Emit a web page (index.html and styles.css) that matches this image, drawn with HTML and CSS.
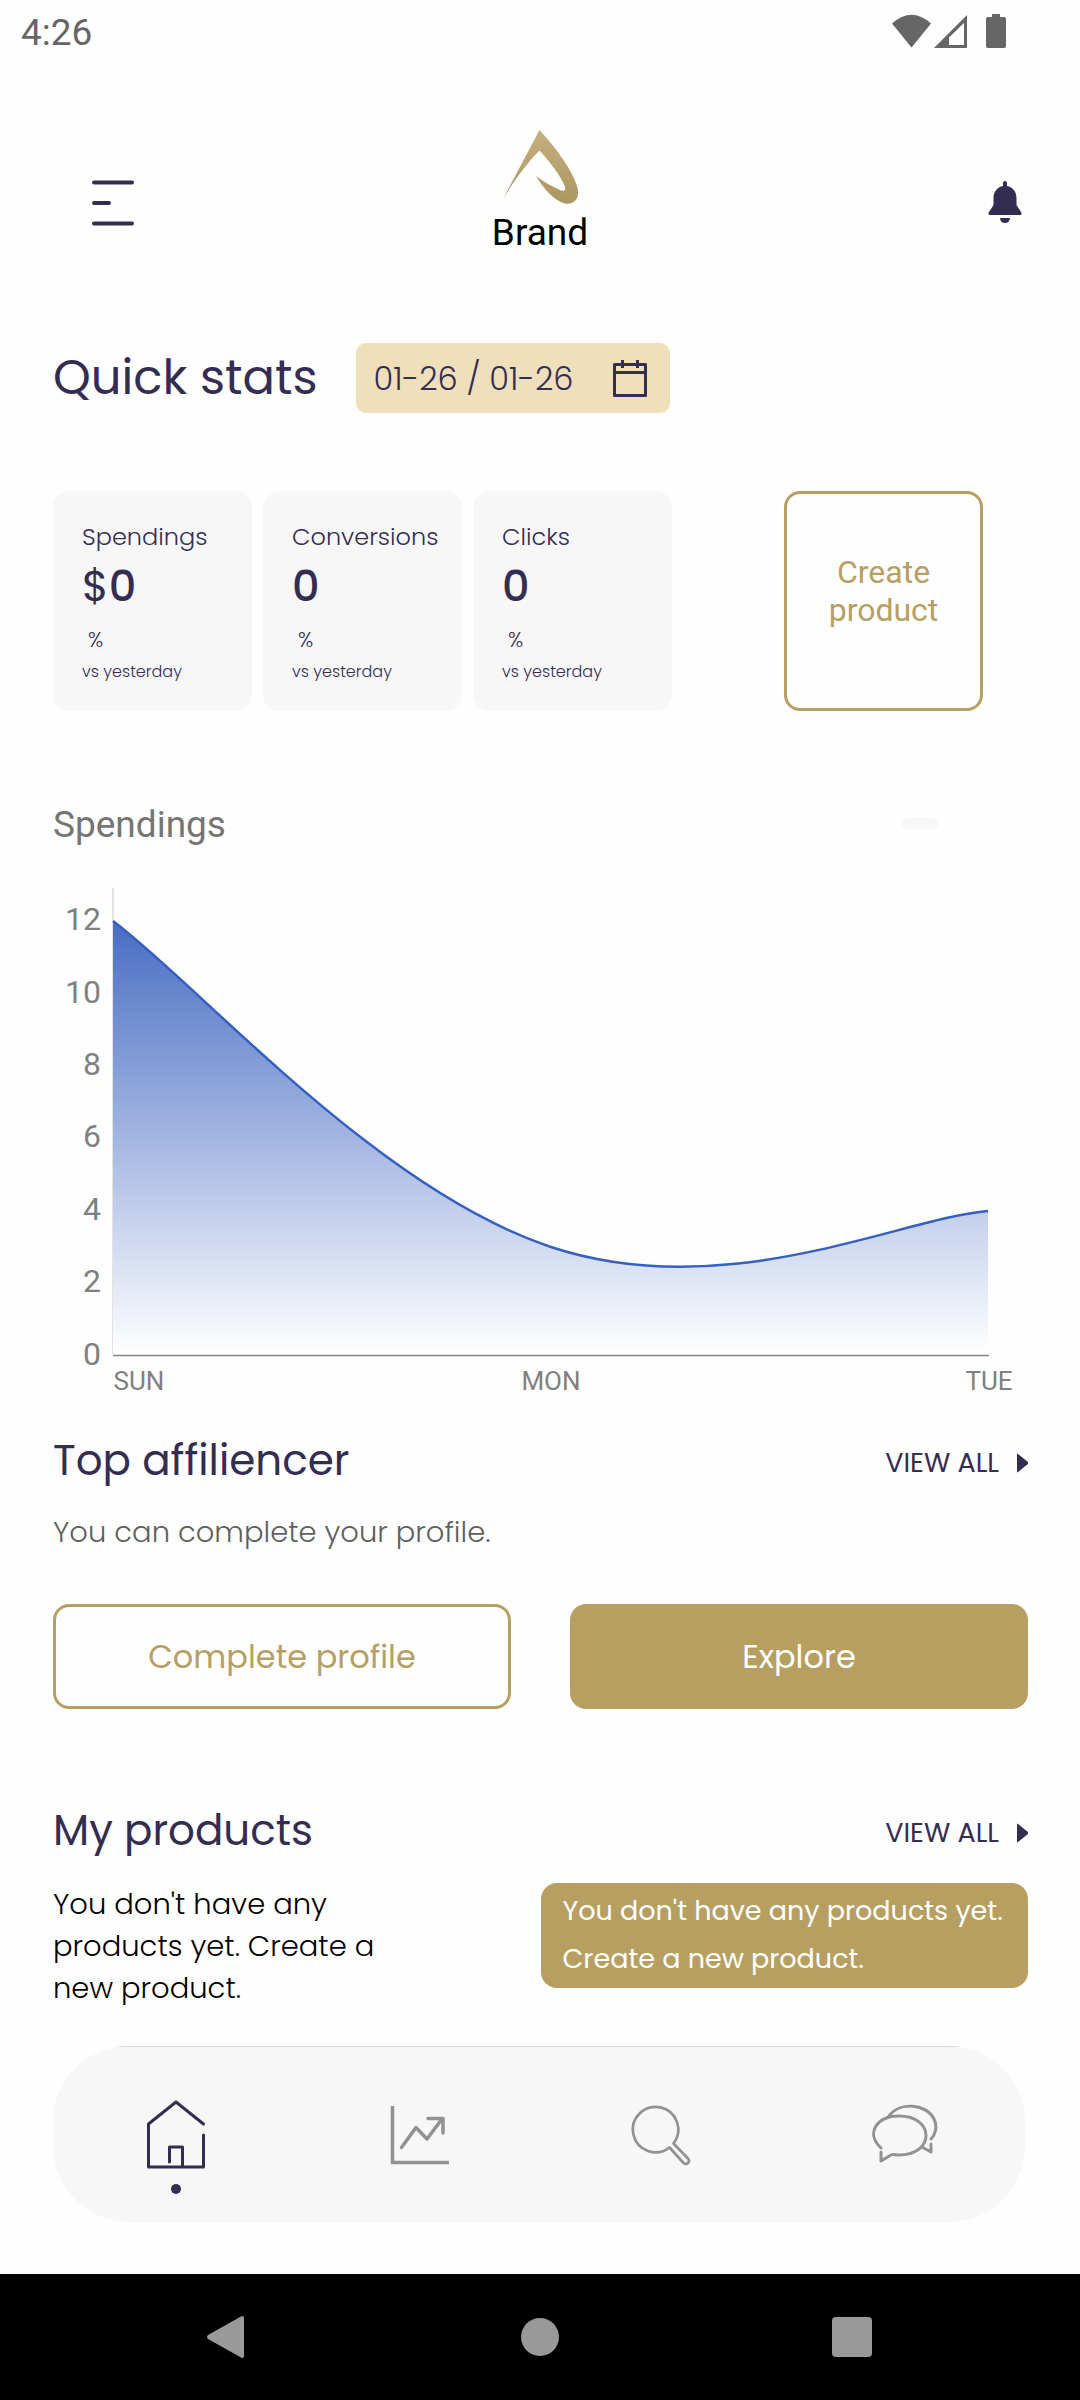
FILE: index.html
```html
<!DOCTYPE html>
<html lang="en">
<head>
<meta charset="utf-8">
<meta name="viewport" content="width=device-width, initial-scale=1">
<title>Brand dashboard</title>
<link rel="stylesheet" href="styles.css">
</head>
<body>
<div class="screen">
  <div class="status-bar">
    <span>4:26</span>
    <svg class="status-icons" width="116" height="36" viewBox="0 0 116 36" aria-hidden="true">
      <path d="M0 9.500Q19.500-8 39 9.500L19.500 33.500z"/>
      <path fill-rule="evenodd" d="M42 34 75 1V34zM57 31H72V9L57 23.500z"/>
      <path d="M100 0h8v3h4q2 0 2 2V32q0 2-2 2H96q-2 0-2-2V5q0-2 2-2h4z"/>
    </svg>
  </div>

  <header class="header">
    <button class="icon-button menu" type="button" aria-label="Menu">
      <svg width="44" height="48" viewBox="0 0 44 48"><path d="M3 3.500H41M3 24H18M3 44.500H41" fill="none" stroke="currentColor" stroke-width="4" stroke-linecap="round"/></svg>
    </button>
    <div class="brand">
      <svg width="78" height="74" viewBox="0 0 78 74" aria-hidden="true">
        <defs><linearGradient id="gold" x1="0" y1="0" x2="0" y2="1"><stop offset="0" stop-color="#c4af7e"/><stop offset="1" stop-color="#ad965f"/></linearGradient></defs>
        <path fill="url(#gold)" d="M38.500 0C56 19 71 40 76 56C80 69 72 75 64 73.500C53 71 42 58 35 46C43 52 52 57 60 60.500C63 61.500 65 60 64 57C61 48 50 33 38.500 20.500C26 33 12 52 1.500 70z"/>
      </svg>
      <span>Brand</span>
    </div>
    <button class="icon-button bell" type="button" aria-label="Notifications">
      <svg width="34" height="46" viewBox="0 0 34 46"><path fill="currentColor" d="M15 4V3q0-2 2-2t2 2v3c6 1 9.500 6 9.500 12v7l4.500 7q1.500 3-1 3H2q-2.500 0-1-3l4.500-7v-7c0-6 3.500-11 9.500-12zM12 38H22Q21.500 43 17 43T12 38z"/></svg>
    </button>
  </header>

  <main class="content">
    <section>
      <div class="stats-head">
        <h1>Quick stats</h1>
        <button class="date" type="button"><span>01-26 / 01-26</span>
          <svg width="34" height="38" viewBox="0 0 34 38" aria-hidden="true"><path d="M1.500 5.500H32.500V36.500H1.500zM1.500 13.500H32.500M9.500 1V9M24.500 1V9" fill="none" stroke="currentColor" stroke-width="3" stroke-linejoin="round"/></svg>
        </button>
      </div>
      <div class="stats-row">
        <div class="stats">
          <article class="card"><h2>Spendings</h2><strong><span class="currency">$</span>0</strong><span class="percent">%</span><small>vs yesterday</small></article>
          <article class="card"><h2>Conversions</h2><strong>0</strong><span class="percent">%</span><small>vs yesterday</small></article>
          <article class="card"><h2>Clicks</h2><strong>0</strong><span class="percent">%</span><small>vs yesterday</small></article>
        </div>
        <button class="create" type="button">Create<br>product</button>
      </div>
    </section>

    <section class="chart">
      <div class="chart-head"><h2>Spendings</h2><span class="pill"></span></div>
      <svg viewBox="0 0 975 520" role="img" aria-label="Spendings by day">
        <defs><linearGradient id="area" gradientUnits="userSpaceOnUse" x1="0" y1="8" x2="0" y2="475"><stop offset="0" stop-color="#3a62bf"/><stop offset="1" stop-color="#fff"/></linearGradient></defs>
        <path d="M60 8V475" stroke="#e3e3e3" stroke-width="2"/>
        <path fill="url(#area)" d="M60 41C148 107 323 309 498 367C673 425 848 338 935 331V475H60z"/>
        <path d="M60 475.500H936" stroke="#868686" stroke-width="1.500"/>
        <path d="M60 41C148 107 323 309 498 367C673 425 848 338 935 331" fill="none" stroke="#3560c0" stroke-width="2.500"/>
        <g class="axis-y">
          <text x="48" y="50">12</text><text x="48" y="123">10</text><text x="48" y="195">8</text><text x="48" y="267">6</text><text x="48" y="340">4</text><text x="48" y="412">2</text><text x="48" y="485">0</text>
        </g>
        <g class="axis-x">
          <text x="86" y="510">SUN</text><text x="498" y="510">MON</text><text x="936" y="510">TUE</text>
        </g>
      </svg>
    </section>

    <section>
      <div class="section-head">
        <h1>Top affiliencer</h1>
        <a href="#affiliencers">VIEW ALL <svg width="11" height="20" viewBox="0 0 11 20" aria-hidden="true"><path fill="currentColor" d="M0 1.500Q0 0 1 1L11 9V11L1 19Q0 20 0 18.500z"/></svg></a>
      </div>
      <p class="note">You can complete your profile.</p>
      <div class="actions">
        <button class="outline" type="button">Complete profile</button>
        <button class="solid" type="button">Explore</button>
      </div>
    </section>

    <section class="products">
      <div class="section-head">
        <h1>My products</h1>
        <a href="#products">VIEW ALL <svg width="11" height="20" viewBox="0 0 11 20" aria-hidden="true"><path fill="currentColor" d="M0 1.500Q0 0 1 1L11 9V11L1 19Q0 20 0 18.500z"/></svg></a>
      </div>
      <div class="products-row">
        <p>You don't have any products yet. Create a new product.</p>
        <button class="solid" type="button">You don't have any products yet. Create a new product.</button>
      </div>
    </section>
  </main>

  <nav class="tabs" aria-label="Main">
    <a class="active" href="#home" aria-label="Home">
      <svg width="72" height="100" viewBox="0 0 72 100"><path d="M65.500 26 38 4 10.500 26V69H65.500V37M31.500 64V49H44.500V69" fill="none" stroke="currentColor" stroke-width="3" stroke-linecap="round" stroke-linejoin="round"/><circle cx="38" cy="91" r="5" fill="currentColor"/></svg>
    </a>
    <a href="#statistics" aria-label="Statistics">
      <svg width="72" height="100" viewBox="0 0 72 100"><path d="M11.500 8V64.500H68" fill="none" stroke="currentColor" stroke-width="3.500"/><path d="M20.500 49.500 35 29.500 46 41 61 21M47 20.500H62V35" fill="none" stroke="currentColor" stroke-width="3.500" stroke-linecap="round" stroke-linejoin="round"/></svg>
    </a>
    <a href="#search" aria-label="Search">
      <svg width="72" height="100" viewBox="0 0 72 100"><path d="M46.500 49.500A22.700 22.700 0 1 1 50.500 45.500L65 60.500Q67 63 65 65T60.500 65Z" fill="none" stroke="currentColor" stroke-width="2.700" stroke-linejoin="round"/></svg>
    </a>
    <a href="#messages" aria-label="Messages">
      <svg width="72" height="100" viewBox="-3 0 72 100"><path d="M12 50C-4 35 8 18 30 18C66 18 66 57 30 57C27 57 24 56 22 57L12 63V54M20 18C31 3 58 6 65 21C69 29 66 37 62 41M62 46V54L53 49" fill="none" stroke="currentColor" stroke-width="3" stroke-linecap="round" stroke-linejoin="round"/></svg>
    </a>
  </nav>

  <div class="system-bar">
    <button type="button" aria-label="Back"><svg width="42" height="44" viewBox="2 0 42 44"><path fill="currentColor" d="M4 20 37 1.500Q40 0 40 3V41Q40 44 37 42.500L4 24Q2 22 4 20z"/></svg></button>
    <button type="button" aria-label="Home"><svg width="42" height="44" viewBox="0 0 42 44"><circle cx="21" cy="22" r="19" fill="currentColor"/></svg></button>
    <button type="button" aria-label="Recent apps"><svg width="42" height="44" viewBox="1 0 42 44"><rect x="1" y="2" width="40" height="40" rx="4" fill="currentColor"/></svg></button>
  </div>
</div>
</body>
</html>
```
FILE: styles.css
```css
* { box-sizing: border-box; }

body {
  margin: 0;
  background: #fefefe;
  color: #342d52;
  font-family: Poppins, Inter, sans-serif;
}

h1, h2, p { margin: 0; font-weight: 400; }
svg { display: block; flex: none; }
a { color: inherit; text-decoration: none; }

button {
  margin: 0;
  padding: 0;
  border: 0;
  background: none;
  color: inherit;
  font: inherit;
  cursor: pointer;
}

.screen {
  display: flex;
  flex-direction: column;
  min-height: 100vh;
}

.status-bar {
  display: flex;
  justify-content: space-between;
  align-items: flex-start;
  height: 66px;
  padding: 12px 72px 0 21px;
  color: #666;
  font: 37px/42px Roboto, sans-serif;
}

.status-icons { margin-top: 2px; fill: currentColor; }

.header {
  display: grid;
  grid-template-columns: 1fr auto 1fr;
  align-items: end;
  padding: 64px 35px 0;
}

.icon-button {
  display: flex;
  align-items: center;
  justify-content: center;
  width: 80px;
  height: 102px;
}

.menu { margin-left: 38px; }
.bell { justify-self: end; }

.brand {
  display: flex;
  flex-direction: column;
  align-items: center;
  gap: 8px;
  color: #000;
  font: 37px/42px Roboto, sans-serif;
}

.content { padding: 89px 52px 0 53px; }

.stats-head {
  display: flex;
  align-items: center;
  gap: 38px;
}

.stats-head h1 { font-size: 48px; line-height: 70px; }

.date {
  display: flex;
  align-items: center;
  justify-content: space-between;
  gap: 40px;
  height: 70px;
  padding: 0 23px 0 18px;
  border-radius: 10px;
  background: #efdfbb;
  font-size: 32px;
  font-weight: 300;
}

.date span { padding-top: 2px; }

.stats-row {
  display: grid;
  grid-template-columns: 619fr 199fr;
  gap: 112px;
  margin-top: 78px;
  padding-right: 45px;
}

.stats {
  display: grid;
  grid-template-columns: repeat(3, 1fr);
  gap: 11px;
}

.card {
  display: flex;
  flex-direction: column;
  min-width: 0;
  min-height: 220px;
  padding: 29px 0 19px 29px;
  border-radius: 16px;
  background: #f7f7f7;
}

.card h2 { font-size: 24px; font-weight: 300; line-height: 34px; }
.card strong { font-size: 43px; font-weight: 500; line-height: 64px; }
.card .currency { font-weight: 400; }
.card .percent { padding-left: 6px; font-size: 21px; font-weight: 300; line-height: 44px; }
.card small { font-size: 16px; font-weight: 300; line-height: 20px; }

.create {
  padding-bottom: 20px;
  border: 3px solid #b79f62;
  border-radius: 16px;
  color: #b79f62;
  font: 32px/38px Roboto, sans-serif;
}

.chart { padding-top: 93px; }

.chart-head {
  display: flex;
  align-items: center;
  justify-content: space-between;
  padding-right: 90px;
  color: #757575;
}

.chart-head h2 { font: 37px/42px Roboto, sans-serif; }
.pill { width: 36px; height: 11px; margin-bottom: 4px; border-radius: 6px; background: #f7f7f7; }
.chart > svg { width: 100%; margin-top: 34px; overflow: visible; }
.chart text { fill: #808080; font-family: Roboto, sans-serif; }
.axis-y { font-size: 32px; text-anchor: end; }
.axis-x { font-size: 26px; text-anchor: middle; }

.section-head {
  display: flex;
  align-items: center;
  justify-content: space-between;
  padding-top: 31px;
}

.section-head h1 { font-size: 42px; line-height: 60px; }

.section-head a {
  display: flex;
  align-items: center;
  gap: 18px;
  padding-top: 4px;
  font-size: 27px;
  line-height: 36px;
}

.note {
  margin-top: 19px;
  color: #5f5f5f;
  font-size: 29px;
  font-weight: 300;
  line-height: 44px;
}

.actions {
  display: grid;
  grid-template-columns: 1fr 1fr;
  gap: 59px;
  margin-top: 50px;
}

.outline, .solid {
  height: 105px;
  border-radius: 16px;
  font-size: 32px;
}

.outline { border: 3px solid #b79f62; color: #b79f62; }
.solid { background: #b79f62; color: #fff; }

.products { padding-top: 61px; }

.products-row {
  display: flex;
  justify-content: space-between;
  align-items: flex-start;
  margin-top: 22px;
}

.products-row p {
  width: 35%;
  color: #000;
  font-size: 29px;
  font-weight: 300;
  line-height: 42px;
}

.products-row .solid {
  width: 50%;
  height: auto;
  min-height: 105px;
  padding: 2px 22px 3px;
  font-size: 27px;
  line-height: 48px;
  text-align: left;
}

.tabs {
  display: grid;
  grid-template-columns: repeat(4, 1fr);
  justify-items: center;
  margin: auto 55px 52px 53px;
  padding: 52px 2px 24px 0;
  border-radius: 76px;
  background: linear-gradient(#d4d4d4, #d4d4d4) top / calc(100% - 130px) 1px no-repeat #f7f7f7;
  color: #929292;
}

.tabs .active { color: #342d52; }

.system-bar {
  display: flex;
  align-items: center;
  justify-content: space-between;
  height: 126px;
  padding: 0 206px;
  background: #000;
  color: #999;
}
```
